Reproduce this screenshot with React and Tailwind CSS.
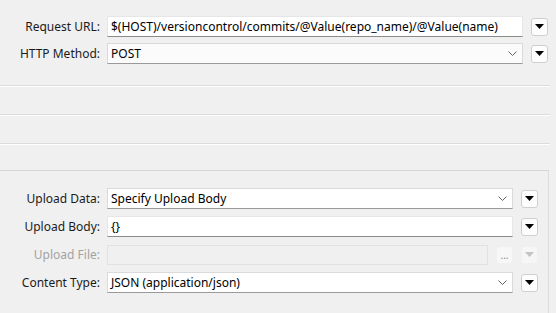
import React from "react";

const font = { fontFamily: '"Noto Sans", "Open Sans", sans-serif' };

function Tri({ disabled }) {
  return (
    <svg width="9" height="5" viewBox="0 0 9 5" className="block">
      <polygon points="0,0 9,0 4.5,5" fill={disabled ? "#c4c4c4" : "#000"} />
    </svg>
  );
}

function ArrowBtn({ disabled }) {
  return (
    <div
      className={
        "w-[17px] h-[18px] shrink-0 rounded-[3px] flex justify-center pt-[5px] " +
        (disabled ? "bg-[#f6f6f6] border border-[#f0f0f0]" : "bg-[#fdfdfd] border border-[#cfcfcf]")
      }
    >
      <Tri disabled={disabled} />
    </div>
  );
}

function Chevron() {
  return (
    <svg width="9" height="5" viewBox="0 0 9 5" className="block">
      <polyline points="0.5,0.5 4.5,4.5 8.5,0.5" fill="none" stroke="#606060" strokeWidth="1" />
    </svg>
  );
}

function TextField({ value }) {
  return (
    <div className="flex-1 h-[21px] bg-white border border-[#e6e6e6] border-b-[#8a8a8a] flex items-center px-[3px] text-[12px] text-black whitespace-nowrap overflow-hidden">
      {value}
    </div>
  );
}

function Combo({ value, light }) {
  return (
    <div
      className={
        "flex-1 h-[21px] border border-[#dadada] border-b-[#9a9a9a] flex items-center pl-[3px] pr-[5px] text-[12px] text-black whitespace-nowrap " +
        (light ? "bg-[#fbfbfb]" : "bg-white")
      }
    >
      <span className="flex-1">{value}</span>
      <Chevron />
    </div>
  );
}

function Row({ label, children, disabled }) {
  return (
    <div className="flex items-center h-[21px]">
      <div
        className={
          "w-[107px] shrink-0 text-right pr-[7px] text-[12px] whitespace-nowrap " +
          (disabled ? "text-[#a3a3a3]" : "text-[#1b1b1b]")
        }
      >
        {label}
      </div>
      {children}
    </div>
  );
}

function Sep() {
  return (
    <div className="w-[550px]">
      <div className="h-px bg-[#dcdcdc]" />
      <div className="h-px bg-white" />
    </div>
  );
}

export default function App() {
  return (
    <div className="w-[556px] h-[313px] bg-[#f0f0f0] overflow-hidden" style={font}>
      <div className="pt-[16px] pr-[8px] flex flex-col gap-[6px]">
        <Row label="Request URL:">
          <TextField value="$(HOST)/versioncontrol/commits/@Value(repo_name)/@Value(name)" />
          <div className="ml-[8px]">
            <ArrowBtn />
          </div>
        </Row>
        <Row label="HTTP Method:">
          <Combo value="POST" light />
          <div className="ml-[8px]">
            <ArrowBtn />
          </div>
        </Row>
      </div>
      <div className="mt-[21px] flex flex-col gap-[27px]">
        <Sep />
        <Sep />
        <Sep />
      </div>
      <div className="mt-[25px] ml-[-2px] w-[551px] h-[200px] border border-[#d5d5d5] border-r-[#dcdcdc]">
        <div className="pt-[17px] pr-[10px] pl-[1px] flex flex-col gap-[7px]">
          <Row label="Upload Data:">
            <Combo value="Specify Upload Body" />
            <div className="ml-[8px]">
              <ArrowBtn />
            </div>
          </Row>
          <Row label="Upload Body:">
            <TextField value="{}" />
            <div className="ml-[8px]">
              <ArrowBtn />
            </div>
          </Row>
          <Row label="Upload File:" disabled>
            <div className="flex-1 h-[20px] bg-[#f0f0f0] border border-[#e2e2e2]" />
            <div className="ml-[8px] w-[17px] h-[18px] rounded-[3px] bg-[#f7f7f7] border border-[#f0f0f0] flex items-end justify-center pb-[3px] text-[10px] leading-none text-[#8a8a8a]">
              ...
            </div>
            <div className="ml-[8px]">
              <ArrowBtn disabled />
            </div>
          </Row>
          <Row label="Content Type:">
            <Combo value="JSON (application/json)" />
            <div className="ml-[8px]">
              <ArrowBtn />
            </div>
          </Row>
        </div>
      </div>
    </div>
  );
}
